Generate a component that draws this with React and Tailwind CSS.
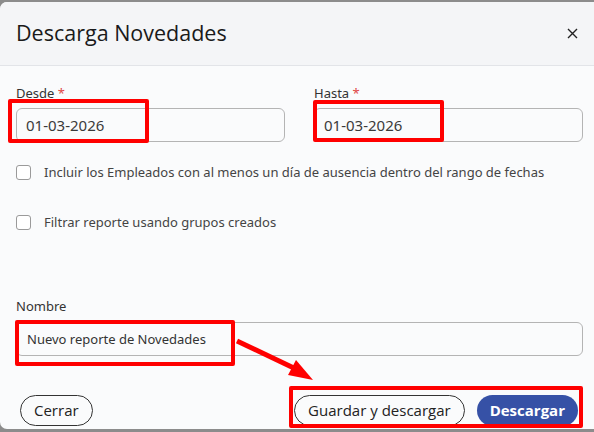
import React, { useState } from 'react';

const bodyFont = { fontFamily: '"Noto Sans", "Open Sans", sans-serif' };

function DateField({ label, value, onChange }) {
  return (
    <label className="block flex-1">
      <div className="text-[13px] leading-4 text-[#333]">
        {label} <span className="text-[#e04545]">*</span>
      </div>
      <input
        value={value}
        onChange={(e) => onChange(e.target.value)}
        className="mt-[7px] h-[34px] w-full rounded-md border border-[#b4b4b4] bg-transparent px-[9px] text-[15px] text-[#3a3a3a] outline-none"
      />
    </label>
  );
}

function Check({ label, checked, onChange }) {
  return (
    <label className="flex items-center gap-[13px]">
      <input
        type="checkbox"
        checked={checked}
        onChange={(e) => onChange(e.target.checked)}
        className="h-[15px] w-[15px] appearance-none rounded-[3px] border border-[#9a9a9a] bg-white"
      />
      <span className="text-[13px] text-[#444]">{label}</span>
    </label>
  );
}

export default function App() {
  const [desde, setDesde] = useState('01-03-2026');
  const [hasta, setHasta] = useState('01-03-2026');
  const [nombre, setNombre] = useState('Nuevo reporte de Novedades');
  const [incluir, setIncluir] = useState(false);
  const [filtrar, setFiltrar] = useState(false);

  return (
    <div className="relative h-[432px] w-[594px] overflow-hidden bg-[#8c8c8c]" style={bodyFont}>
      <div className="mt-[2px] flex h-[427px] flex-col overflow-hidden rounded-l-[7px] bg-[#fafbfc]">
        <div className="flex h-[64px] shrink-0 items-center justify-between border-b border-[#e2e4e8] bg-[#f4f5f7] pl-4 pr-[16px]">
          <h2 className="text-[21.5px] text-[#1a1a1a]" style={{ fontFamily: '"Open Sans", sans-serif' }}>
            Descarga Novedades
          </h2>
          <button className="text-[#222]">
            <svg width="11" height="11" viewBox="0 0 11 11" fill="none" stroke="currentColor" strokeWidth="1.4">
              <path d="M1 1l9 9M10 1l-9 9" />
            </svg>
          </button>
        </div>

        <div className="flex flex-1 flex-col pl-4 pr-[11px] pt-[19px]">
          <div className="flex gap-[29px]">
            <DateField label="Desde" value={desde} onChange={setDesde} />
            <DateField label="Hasta" value={hasta} onChange={setHasta} />
          </div>

          <div className="mt-[21px] flex flex-col gap-[30px]">
            <Check
              label="Incluir los Empleados con al menos un día de ausencia dentro del rango de fechas"
              checked={incluir}
              onChange={setIncluir}
            />
            <Check label="Filtrar reporte usando grupos creados" checked={filtrar} onChange={setFiltrar} />
          </div>

          <label className="mt-[66px] block">
            <div className="text-[13px] leading-4 text-[#333]">Nombre</div>
            <input
              value={nombre}
              onChange={(e) => setNombre(e.target.value)}
              className="mt-[8px] h-[34px] w-full rounded-md border border-[#b4b4b4] bg-transparent px-[10px] text-[13px] text-[#333] outline-none"
            />
          </label>

          <div className="mt-[39px] flex items-center justify-between pl-1" style={{ fontFamily: '"Open Sans", sans-serif' }}>
            <button className="h-[31px] rounded-full border border-[#333] px-[13px] text-[15px] text-[#222]">Cerrar</button>
            <div className="flex gap-3 pr-[5px]">
              <button className="h-[31px] rounded-full border border-[#333] px-[13px] text-[15px] font-medium text-[#222]">
                Guardar y descargar
              </button>
              <button className="h-[31px] rounded-full bg-[#3651a6] px-[13px] text-[15px] font-bold text-white">
                Descargar
              </button>
            </div>
          </div>
        </div>
      </div>

      {/* red highlight marks */}
      <div className="pointer-events-none absolute left-[8px] top-[99px] h-[44px] w-[141px] rounded-[2px] border-4 border-[#f00]" />
      <div className="pointer-events-none absolute left-[313px] top-[100px] h-[42px] w-[131px] rounded-[2px] border-4 border-[#f00]" />
      <div className="pointer-events-none absolute left-[15px] top-[320px] h-[46px] w-[220px] rounded-[2px] border-4 border-[#f00]" />
      <div className="pointer-events-none absolute left-[289px] top-[386px] h-[42px] w-[294px] rounded-[2px] border-4 border-[#f00]" />
      <svg className="pointer-events-none absolute left-0 top-0" width="594" height="432">
        <line x1="237" y1="341" x2="298" y2="370" stroke="#f00" strokeWidth="5" />
        <polygon points="313,380 288,375 296,360" fill="#f00" />
      </svg>
    </div>
  );
}
